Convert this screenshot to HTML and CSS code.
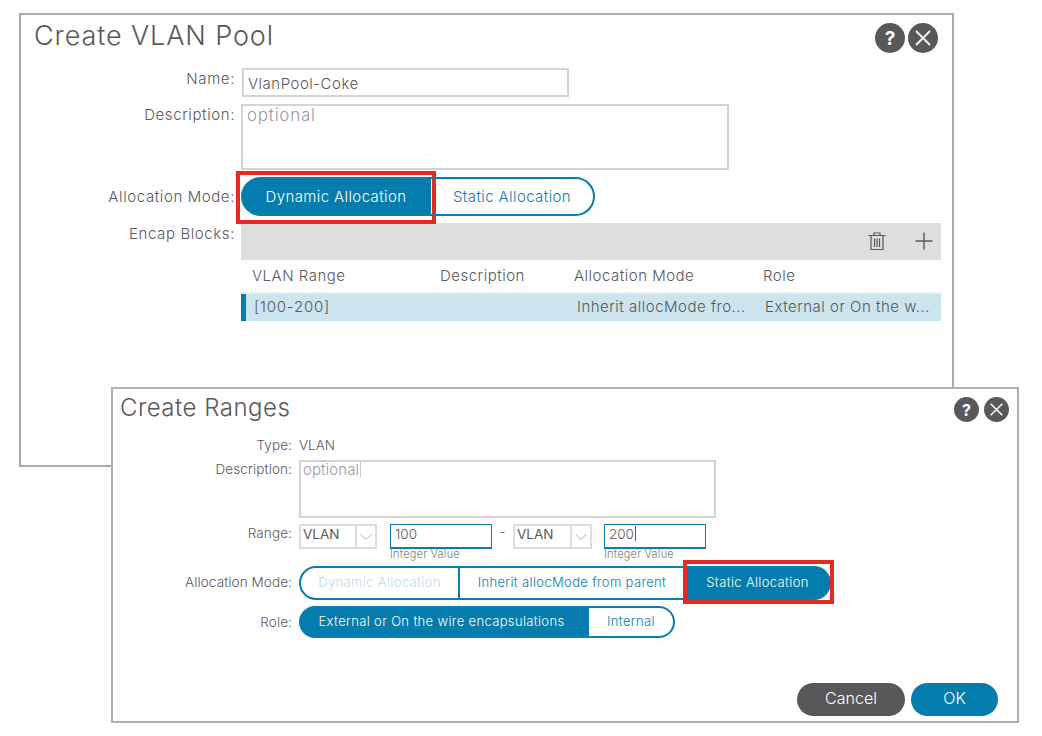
FILE: index.html
```html
<!DOCTYPE html>
<html lang="en">
<head>
<meta charset="utf-8">
<title>Create VLAN Pool</title>
<link rel="stylesheet" href="styles.css">
</head>
<body>
<section class="dialog pool">
  <header class="head">
    <h1 class="title">Create VLAN Pool</h1>
    <div class="tools">
      <span class="round">?</span>
      <span class="round"><svg viewBox="0 0 30 30" class="x"><path d="M8 8 22 22M22 8 8 22"/></svg></span>
    </div>
  </header>
  <div class="form">
    <label class="lab">Name:</label>
    <div class="field name">VlanPool-Coke</div>
    <label class="lab">Description:</label>
    <div class="field area ph">optional</div>
    <label class="lab lab-mid">Allocation Mode:</label>
    <div class="toggle big">
      <span class="seg on first w190 mark-a">Dynamic Allocation</span>
      <span class="seg last w164">Static Allocation</span>
    </div>
    <label class="lab lab-enc">Encap Blocks:</label>
    <div class="table">
      <div class="bar">
        <svg class="trash" viewBox="0 0 20 20"><path d="M1.500 4.500H18.500M7 4.500V2H13V4.500M4 5V18.500H16V5M7.500 7.500V16M10 7.500V16M12.500 7.500V16"/></svg>
        <svg class="plus" viewBox="0 0 20 20"><path d="M10 1.500V18.500M1.500 10H18.500"/></svg>
      </div>
      <div class="cols thead"><span>VLAN Range</span><span>Description</span><span>Allocation Mode</span><span>Role</span></div>
      <div class="cols row"><span>[100-200]</span><span></span><span>Inherit allocMode fro...</span><span>External or On the w...</span></div>
    </div>
  </div>
</section>

<section class="dialog ranges">
  <header class="head small">
    <h2 class="title sub">Create Ranges</h2>
    <div class="tools">
      <span class="round tiny">?</span>
      <span class="round tiny"><svg viewBox="0 0 30 30" class="x"><path d="M8 8 22 22M22 8 8 22"/></svg></span>
    </div>
  </header>
  <div class="form f2">
    <label class="lab">Type:</label>
    <div class="plain">VLAN</div>
    <label class="lab">Description:</label>
    <div class="field area2 ph">optional<span class="caret"></span></div>
    <label class="lab">Range:</label>
    <div class="range">
      <div class="select"><span class="sel-text">VLAN</span><span class="chev"><svg viewBox="0 0 18 18"><path d="M3 6 9 12 15 6"/></svg></span></div>
      <div class="num-wrap"><div class="num">100</div><div class="hint">Integer Value</div></div>
      <span class="dash">-</span>
      <div class="select s2"><span class="sel-text">VLAN</span><span class="chev"><svg viewBox="0 0 18 18"><path d="M3 6 9 12 15 6"/></svg></span></div>
      <div class="num-wrap n2"><div class="num">200<span class="caret dark"></span></div><div class="hint">Integer Value</div></div>
    </div>
    <label class="lab lab-c">Allocation Mode:</label>
    <div class="toggle mid">
      <span class="seg first dim w161">Dynamic Allocation</span>
      <span class="seg w226">Inherit allocMode from parent</span>
      <span class="seg on last w145 mark-b">Static Allocation</span>
    </div>
    <label class="lab lab-c">Role:</label>
    <div class="toggle mid role">
      <span class="seg on first w290">External or On the wire encapsulations</span>
      <span class="seg last w86">Internal</span>
    </div>
  </div>
  <footer class="foot">
    <button class="btn grey">Cancel</button>
    <button class="btn blue">OK</button>
  </footer>
</section>
</body>
</html>
```

FILE: styles.css
```css
* { box-sizing: border-box; }
html, body { margin: 0; padding: 0; background: #fff; }
body { width: 1042px; height: 736px; position: relative; overflow: hidden; font-family: Inter, "Liberation Sans", sans-serif; font-weight: 300; color: #58585b; font-size: 15px; }

.dialog { position: absolute; background: #fff; border: 2px solid #a9a9a9; display: flex; flex-direction: column; }
.pool { left: 19px; top: 13px; width: 935px; height: 454px; padding-right: 11px; }
.ranges { left: 111px; top: 387px; width: 908px; height: 336px; border-color: #b0b0b0; }

.head { height: 53px; display: flex; justify-content: space-between; align-items: flex-start; }
.head.small { height: 47px; }
.title { margin: 4px 0 0 13px; font-size: 27px; line-height: 34px; font-weight: 300; color: #58585b; letter-spacing: .9px; }
.title.sub { margin: 2px 0 0 7px; font-size: 24px; line-height: 34px; letter-spacing: .5px; }
.tools { display: flex; gap: 3px; margin: 8px 3px 0 0; }
.small .tools { margin: 8px 8px 0 0; gap: 5px; }
.round { width: 30px; height: 30px; border-radius: 50%; background: #58585b; color: #fff; font-weight: 700; font-size: 19px; display: flex; align-items: center; justify-content: center; }
.round.tiny { width: 25px; height: 25px; font-size: 16px; }
.x { width: 100%; height: 100%; fill: none; stroke: #fff; stroke-width: 1.800; }

.form { display: grid; grid-template-columns: 214px 1fr; column-gap: 6px; row-gap: 7px; }
.f2 { grid-template-columns: 179px 1fr; column-gap: 7px; row-gap: 6px; }
.lab { text-align: right; font-size: 15px; line-height: 22px; letter-spacing: .6px; }
.lab-mid { line-height: 39px; }
.f2 .lab { font-size: 13.500px; line-height: 18px; letter-spacing: .1px; }
.f2 .lab-c { padding-top: 7px; }

.field { border: 2px solid #d4d4d6; padding: 3px 4px; font-size: 15px; line-height: 21px; letter-spacing: .5px; }
.name { width: 327px; height: 29px; margin-left: 1px; }
.area { width: 488px; height: 66px; font-size: 17px; line-height: 18px; padding: 0 4px; letter-spacing: .75px; }
.area2 { width: 417px; height: 58px; font-size: 15px; line-height: 16px; padding: 0 2px; letter-spacing: .1px; }
.ph { color: #9a9a9c; }
.caret { display: inline-block; width: 1px; height: 15px; background: #c8c8c8; vertical-align: -2px; margin-left: 1px; }
.caret.dark { background: #58585b; }
.plain { font-size: 13.500px; line-height: 18px; }

.toggle { display: flex; }
.big { height: 39px; width: 354px; }
.seg { position: relative; display: flex; align-items: center; justify-content: center; border: 2px solid #097dad; border-left-width: 0; color: #097dad; white-space: nowrap; }
.big .seg { font-size: 15px; letter-spacing: .4px; padding-bottom: 1px; }
.seg.first { border-left-width: 2px; border-radius: 20px 0 0 20px; }
.seg.last { border-radius: 0 20px 20px 0; }
.seg.on { background: #047cad; color: #fff; }
.seg.dim { color: #bcdcea; }
.w190 { width: 190px; }
.w164 { width: 164px; }
.mid { height: 34px; width: 532px; }
.mid .seg { font-size: 13px; letter-spacing: .35px; padding-bottom: 3px; }
.role { height: 32px; width: 376px; }
.role .seg.first { padding-right: 5px; }
.w161 { width: 161px; }
.w226 { width: 226px; }
.w145 { width: 145px; }
.w290 { width: 290px; }
.w86 { width: 86px; }

.mark-a::after, .mark-b::after { content: ""; position: absolute; border: 4px solid #e62a20; }
.mark-a::after { left: -7px; right: -7px; top: -8px; bottom: -10px; }
.mark-b::after { left: -3px; right: -5px; top: -8px; bottom: -6px; }

.lab-enc { line-height: 22px; }
.table { width: 700px; }
.bar { height: 37px; background: #dedede; display: flex; justify-content: flex-end; align-items: center; padding: 0 7px 2px 0; gap: 27px; }
.trash { width: 20px; height: 20px; fill: none; stroke: #58585b; stroke-width: 1.200; }
.plus { width: 20px; height: 20px; fill: none; stroke: #58585b; stroke-width: 1.400; }
.cols { display: grid; grid-template-columns: 199px 134px 189px 178px; align-items: center; font-size: 15px; white-space: nowrap; letter-spacing: .5px; }
.thead { height: 34px; border-bottom: 2px solid #ececec; padding-bottom: 2px; }
.thead span:first-child { padding-left: 11px; }
.row { height: 27px; background: #cce4ee; border-left: 5px solid #047cad; grid-template-columns: 194px 137px 188px 176px; padding-bottom: 2px; }
.row span:first-child { padding-left: 8px; letter-spacing: .8px; }

.range { display: flex; align-items: flex-start; height: 36px; }
.select { width: 78px; height: 25px; border: 2px solid #dcdcdc; display: flex; font-size: 13.500px; font-weight: 400; }
.sel-text { width: 56px; padding-left: 2px; line-height: 17px; border-right: 2px solid #dcdcdc; }
.chev { flex: 1; display: flex; align-items: center; justify-content: center; }
.chev svg { width: 16px; height: 16px; fill: none; stroke: #a6a6a8; stroke-width: 1; }
.num-wrap { width: 102px; margin-left: 13px; }
.num { height: 25px; border: 2px solid #097dad; border-width: 1px 1px 2px; padding-left: 4px; font-size: 13.500px; line-height: 19px; }
.hint { font-size: 11px; line-height: 11px; letter-spacing: .2px; color: #7d7d80; }
.dash { width: 21px; text-align: center; font-size: 13px; line-height: 17px; }
.s2 { width: 79px; }
.s2 .sel-text { width: 57px; }
.n2 { margin-left: 12px; }

.foot { margin-top: auto; display: flex; justify-content: flex-end; gap: 6px; padding: 0 19px 5px 0; }
.btn { height: 33px; border: 0; border-radius: 17px; color: #fff; font-family: inherit; font-weight: 300; font-size: 16px; padding: 0 0 3px; }
.grey { width: 108px; background: #58585b; }
.blue { width: 87px; background: #047cad; }
```
